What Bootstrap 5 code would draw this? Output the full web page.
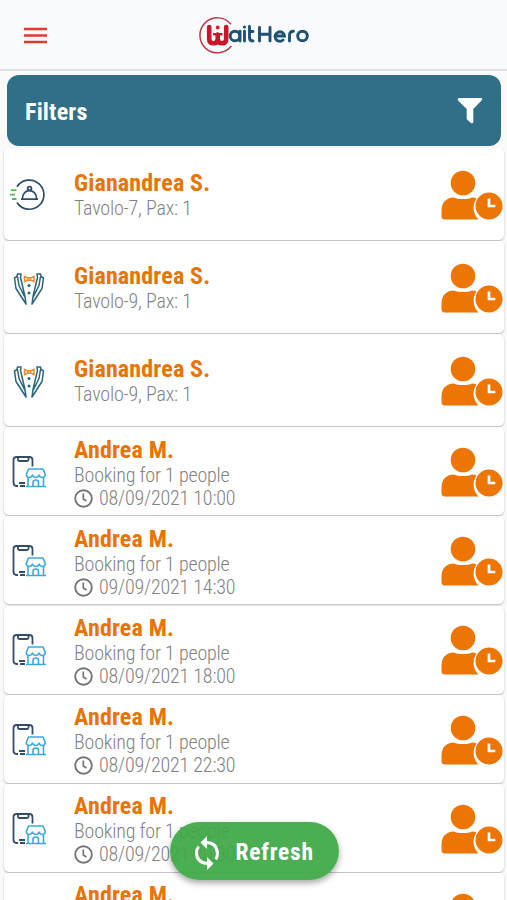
<!DOCTYPE html>
<html lang="en">
<head>
<meta charset="utf-8">
<meta name="viewport" content="width=device-width, initial-scale=1">
<title>WaitHero</title>
<link href="https://cdn.jsdelivr.net/npm/bootstrap@5.3.0/dist/css/bootstrap.min.css" rel="stylesheet">
<style>
html,body{height:900px;overflow:hidden}
body{background:#fafafa;font-family:"Roboto Condensed",Roboto,sans-serif;font-stretch:75%}
.topbar{height:71px;background:#f9fafe;border-bottom:2px solid #e0e1e4}
.topbar .menu{width:24px;height:17px;margin-left:24px;margin-top:1px}
.topbar .brand{width:120px;height:45px;margin-left:149px}
.filters{height:71px;margin:4.300px 6px 0 7px;background:#316f89;border-radius:12px;padding:0 18px 0 18px;color:#fff}
.filters-title{font-size:24px;font-weight:700;line-height:28px;letter-spacing:.2px;padding-top:2px}
.entries{margin:2px 3px 0 4px}
.entry{background:#fff;border-radius:5px;box-shadow:0 1px 2px rgba(0,0,0,.27);margin-bottom:1.2px;height:88px;flex-shrink:0;padding-top:1.500px}
.entry.tall{height:91.8px}
.entry-icon{width:70px;padding-left:6px}
.entry-icon svg{width:36px;height:36px;display:block}
.guest{color:#ea7305;font-size:24px;font-weight:700;line-height:27px;letter-spacing:.16px}
.detail{color:#828282;font-size:20px;font-weight:300;line-height:23px;letter-spacing:-.2px}
.entry:not(.tall) .entry-body{padding-top:2px}
.detail svg{width:19px;height:19px;margin-right:6px}
.waiting{width:62px;height:52px;margin-right:1px}
.refresh{left:170px;top:822px;width:169px;height:58px;border-radius:29px;background:rgba(62,168,70,.93);color:#fff;box-shadow:0 3px 6px rgba(0,0,0,.35);border:0;font-size:23.500px;font-weight:700;letter-spacing:.75px;padding:3px 0 0 23px}
.refresh svg{width:28px;height:34px;margin-right:14.500px}
</style>
</head>
<body>
<svg class="d-none">
<symbol id="cloche" viewBox="0 0 36 36"><g fill="none" stroke="#2e4d68" stroke-width="1.7"><path d="M7 9.800A14.600 14.600 0 1 1 7 25.500"/><path d="M11 22.100H28M12.500 21.500C12.500 11 26.500 11 26.500 21.500"/><circle cx="19.500" cy="11.500" r="1.900"/></g><path d="M1 13.200H6.500M0 17.700H5M2 22H6.500" stroke="#55b956" stroke-width="1.800"/></symbol>
<symbol id="tux" viewBox="0 0 36 36"><g transform="translate(0 1.500)"><g fill="none" stroke="#2a657d" stroke-width="1.500" stroke-linejoin="round"><path d="M11 2.500H7.500L7 5 4.500 6.500 6 17 16 32.500 15 25 10.500 6zM27 2.500H30.500L31 5 33.500 6.500 32 17 22 32.500 23 25 27.500 6zM7.500 5 9 14 15 26M30.500 5 29 14 23 26"/></g><g fill="#2a657d"><circle cx="19" cy="14" r="1.500"/><circle cx="19" cy="21.500" r="1.500"/></g><path d="M14.500 5 18 6.500V8.500L14.500 10zM24 5 20.500 6.500V8.500L24 10zM18 6.300H20.500V8.700H18z" fill="#fff" stroke="#ef8a2d" stroke-width="1.500"/></g></symbol>
<symbol id="shop" viewBox="0 0 36 36"><g transform="translate(0 .5)"><g fill="none" stroke="#364d69" stroke-width="1.800"><path d="M22.500 12V5.500Q22.500 2.500 19.500 2.500H6.500Q3.500 2.500 3.500 5.500V28Q3.500 31.500 6.500 31.500H8M10 31.500H15M9 28.500H15M8 3V5Q8 6.500 9.500 6.500H17Q18.500 6.500 18.500 5V3"/></g><g fill="none" stroke="#3fa8de" stroke-width="1.600" stroke-linejoin="round"><path d="M18.500 14.500H33L35.300 20Q35 23 32.300 23 30 23 29 20.500 28 23 25.800 23 23.500 23 22.500 20.500 21.500 23 19.200 23 16.500 23 16.300 20zM18 23V32M33.500 23V32M16 32H36M23 32V28Q23 25.500 25.700 25.500 28.500 25.500 28.500 28V32"/></g></g></symbol>
<symbol id="clock" viewBox="0 0 19 19"><circle cx="9.500" cy="9.500" r="8.300" fill="none" stroke="#757575" stroke-width="1.900"/><path d="M9.300 4.500V10L12.500 12" fill="none" stroke="#757575" stroke-width="1.700"/></symbol>
<symbol id="wait" viewBox="0 0 62 52"><g fill="#ed7503"><circle cx="22" cy="14" r="12.300"/><path d="M13 28.500C17 30.500 27 30.500 31 28.500Q34 28.500 35.500 29.500A16.300 16.300 0 0 0 37.500 50.500H4Q.5 50.500.5 47V42Q.5 29 13 28.500z"/><circle cx="48" cy="37" r="13.500"/></g><path d="M48 29.500V37H54.300" fill="none" stroke="#fff" stroke-width="2.700"/></symbol>
</svg>

<nav class="topbar d-flex align-items-center">
<svg class="menu" viewBox="0 0 24 17"><path d="M0 2H23M0 8.500H23M0 15H23" stroke="#df3c30" stroke-width="2.400"/></svg>
<svg class="brand" viewBox="0 0 120 45">
<path d="M34 12.300A17.500 17.500 0 1 0 34.300 34" fill="none" stroke="#b93b45" stroke-width="1.500"/>
<path d="M12.200 15V27Q12.200 31.300 16.500 31.300 20.700 31.300 20.700 27V22.500M20.700 27Q20.700 31.300 25 31.300 29.200 31.300 29.200 27V15" fill="none" stroke="#cb1725" stroke-width="4.600" stroke-linecap="round"/><path d="M16 22.200H25.500" stroke="#cb1725" stroke-width="2.400"/><circle cx="20.700" cy="15.500" r="1.900" fill="#da1827"/>
<g fill="none" stroke="#1d5370" stroke-width="2.900" stroke-linecap="round"><circle cx="38" cy="24" r="4.800"/><path d="M43 19.300V29M47.500 19.300V29M52.500 14.500V25.500Q52.500 29 56 29M52.500 19.500H56M62.500 15.500V29M73 15.500V29M62.500 22.300H73M79 24H87.500A4.700 4.700 0 1 0 86 28M92.500 29V23.500Q92.500 19.300 96.500 19.300"/><circle cx="105.500" cy="24" r="4.800"/></g><circle cx="47.500" cy="15" r="1.600" fill="#1d5370"/>
</svg>
</nav>

<section class="filters d-flex align-items-center justify-content-between">
<span class="filters-title">Filters</span>
<svg width="26" height="26" viewBox="0 0 26 26"><path d="M2 0H24Q26 .5 24.500 2.500L16.300 11V24Q16 26 14 25L10.500 22Q9.700 21.300 9.700 20V11L1 2.500Q0 .5 2 0z" fill="#fff"/></svg>
</section>

<main class="entries d-flex flex-column" id="entries"></main>

<button class="refresh btn position-absolute d-flex align-items-center" type="button">
<svg viewBox="0 0 28 34"><g fill="none" stroke="#fff" stroke-width="3"><path d="M13 6.500Q23.800 6.500 24.500 17.500 24.500 20.500 22.800 23.500M15 27.500Q3.500 27 3.500 16.500 3.500 13 5.800 10.500"/></g><path d="M14 0V13L7.500 6.500zM14 21V34L20.500 27.500z" fill="#fff"/></svg>
<span>Refresh</span>
</button>

<script>
const entries=[
 {icon:'cloche',table:7},{icon:'tux',table:9},{icon:'tux',table:9},
 {date:'08/09/2021 10:00'},{date:'09/09/2021 14:30'},{date:'08/09/2021 18:00'},
 {date:'08/09/2021 22:30'},{date:'08/09/2021 20:30'},{date:'08/09/2021 21:00'}];
document.getElementById('entries').innerHTML=entries.map(e=>`
<article class="entry d-flex align-items-center ${e.table?'tall':''}">
<div class="entry-icon"><svg><use href="#${e.icon||'shop'}"/></svg></div>
<div class="entry-body flex-grow-1">
<div class="guest">${e.table?'Gianandrea S.':'Andrea M.'}</div>
<div class="detail">${e.table?`Tavolo-${e.table}, Pax: 1`:'Booking for 1 people'}</div>
${e.date?`<div class="detail d-flex align-items-center"><svg><use href="#clock"/></svg>${e.date}</div>`:''}
</div>
<svg class="waiting"><use href="#wait"/></svg>
</article>`).join('');
</script>
<script src="https://cdn.jsdelivr.net/npm/bootstrap@5.3.0/dist/js/bootstrap.bundle.min.js"></script>
</body>
</html>
